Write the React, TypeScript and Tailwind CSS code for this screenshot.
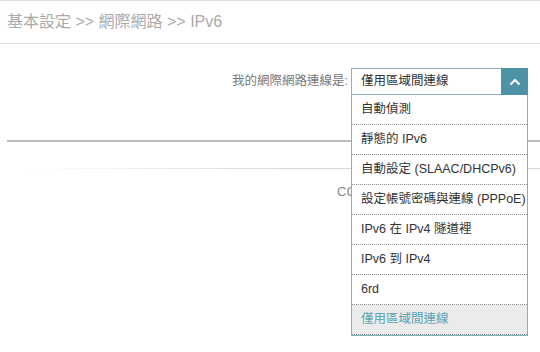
const options = [
  "自動偵測",
  "靜態的 IPv6",
  "自動設定 (SLAAC/DHCPv6)",
  "設定帳號密碼與連線 (PPPoE)",
  "IPv6 在 IPv4 隧道裡",
  "IPv6 到 IPv4",
  "6rd",
  "僅用區域間連線",
];

const selected = "僅用區域間連線";

export default function App() {
  return (
    <div className="w-[540px] h-[352px] overflow-hidden bg-white border-t border-[#dcdcdc] font-['Liberation_Sans','Noto_Sans_CJK_TC',sans-serif]">
      {/* breadcrumb */}
      <div className="h-[43px] px-[7px] flex items-center text-[16px] text-[#aaaaaa] border-b border-[#e3e3e3]">
        基本設定 &gt;&gt; 網際網路 &gt;&gt; IPv6
      </div>

      {/* connection type row */}
      <div className="flex items-center justify-end pr-[12px] pt-[24px] gap-[3px]">
        <span className="text-[12.5px] text-[#777777]">我的網際網路連線是:</span>
        <div className="relative w-[177px]">
          <div className="flex h-[27px] border border-[#8fb3bd]">
            <div className="flex-1 flex items-center pl-[9px] text-[12.5px] text-[#333333]">
              {selected}
            </div>
            <div className="w-[27px] -my-px -mr-px flex items-center justify-center bg-[#4d93a6]">
              <svg width="12" height="8" viewBox="0 0 12 8" fill="none">
                <path d="M1.5 6.5 L6 2 L10.5 6.5" stroke="white" strokeWidth="2.2" />
              </svg>
            </div>
          </div>

          {/* open list */}
          <ul className="absolute left-0 top-full w-[177px] bg-white border border-t-0 border-[#79b4c4] z-10">
            {options.map((o) => (
              <li
                key={o}
                className={`h-[30px] flex items-center pl-[9px] text-[12.5px] border-b border-dotted border-[#8a8a8a] ${
                  o === selected ? "bg-[#ebebeb] text-[#5aa3b6]" : "text-[#333333]"
                }`}
              >
                {o}
              </li>
            ))}
          </ul>
        </div>
      </div>

      {/* section content behind the list */}
      <div className="mt-[45px] ml-[7px] h-[2px] bg-[#bdbdbd]" />
      <div className="mt-[26px] ml-[25px] h-px bg-gradient-to-r from-white via-[#d8d8d8] to-[#d8d8d8]" />
      <div className="mt-[13px] ml-[337px] text-[13px] text-[#888888] whitespace-nowrap">
        CO
      </div>
    </div>
  );
}
